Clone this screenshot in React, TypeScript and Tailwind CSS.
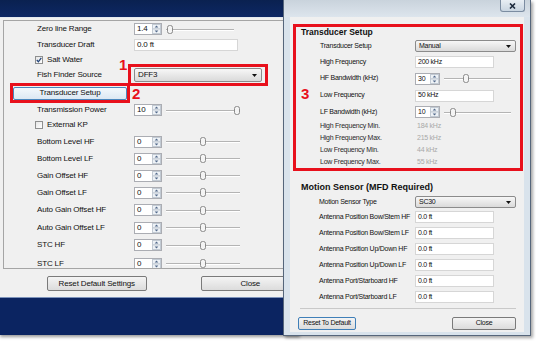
import React from "react";

type LeftRowDef = {
  label: string;
  type: "spin" | "text" | "check" | "select" | "button";
  value?: string;
  pos?: number;
  track?: number;
  checked?: boolean;
  h: string;
};

const leftRows: LeftRowDef[] = [
  { label: "Zero line Range", type: "spin", value: "1.4", pos: 4, track: 68, h: "h-[16px]" },
  { label: "Transducer Draft", type: "text", value: "0.0 ft", h: "h-[16px]" },
  { label: "Salt Water", type: "check", checked: true, h: "h-[14px]" },
  { label: "Fish Finder Source", type: "select", value: "DFF3", h: "h-[16px]" },
  { label: "Transducer Setup", type: "button", h: "h-[20px]" },
  { label: "Transmission Power", type: "spin", value: "10", pos: 71, track: 74, h: "h-[14px]" },
  { label: "External KP", type: "check", h: "h-[16px]" },
  { label: "Bottom Level HF", type: "spin", value: "0", pos: 37, track: 74, h: "h-[17px]" },
  { label: "Bottom Level LF", type: "spin", value: "0", pos: 37, track: 74, h: "h-[17px]" },
  { label: "Gain Offset HF", type: "spin", value: "0", pos: 37, track: 74, h: "h-[17px]" },
  { label: "Gain Offset LF", type: "spin", value: "0", pos: 37, track: 74, h: "h-[17px]" },
  { label: "Auto Gain Offset HF", type: "spin", value: "0", pos: 37, track: 74, h: "h-[18px]" },
  { label: "Auto Gain Offset LF", type: "spin", value: "0", pos: 37, track: 74, h: "h-[17px]" },
  { label: "STC HF", type: "spin", value: "0", pos: 37, track: 74, h: "h-[18px]" },
  { label: "STC LF", type: "spin", value: "0", pos: 37, track: 74, h: "h-[19px]" },
];

const antennaRows = [
  "Antenna Position Bow/Stem HF",
  "Antenna Position Bow/Stem LF",
  "Antenna Position Up/Down HF",
  "Antenna Position Up/Down LF",
  "Antenna Port/Starboard HF",
  "Antenna Port/Starboard LF",
];

const infoRows = [
  { label: "High Frequency Min.", value: "184 kHz" },
  { label: "High Frequency Max.", value: "215 kHz" },
  { label: "Low Frequency Min.", value: "44 kHz" },
  { label: "Low Frequency Max.", value: "55 kHz" },
];

function Spin({ value, w, h }: { value: string; w: string; h: string }) {
  return (
    <div className={`flex shrink-0 border border-[#abadb3] bg-white ${w} ${h}`}>
      <span className="flex-1 pl-[2px] leading-[10px]">{value}</span>
      <svg width="9" height="10" viewBox="0 0 9 10" className="shrink-0">
        <rect x="0.5" y="0.5" width="8" height="4.5" fill="#eef2f6" stroke="#c2cad3" />
        <rect x="0.5" y="5" width="8" height="4.5" fill="#eef2f6" stroke="#c2cad3" />
        <path d="M4.5 1.6 L6.3 3.6 L2.7 3.6Z" fill="#52698a" />
        <path d="M4.5 8.4 L6.3 6.4 L2.7 6.4Z" fill="#52698a" />
      </svg>
    </div>
  );
}

function Slider({ w, pos }: { w: number; pos: number }) {
  return (
    <svg width={w} height="11" viewBox={`0 0 ${w} 11`} className="ml-[4px] shrink-0">
      <line x1="0" y1="5.5" x2={w} y2="5.5" stroke="#b4b4b4" />
      <line x1="0" y1="6.5" x2={w} y2="6.5" stroke="#ffffff" />
      <rect x={pos - 2.5} y="1.5" width="5" height="8" rx="2" fill="#f4f4f4" stroke="#8a8a8a" />
    </svg>
  );
}

function Select({ value, w, h }: { value: string; w: string; h: string }) {
  return (
    <div
      className={`flex shrink-0 items-center rounded-[2px] border border-[#8b8b8b] bg-gradient-to-b from-[#f7f7f7] to-[#dadada] pl-[3px] pr-[4px] ${w} ${h}`}
    >
      <span className="flex-1">{value}</span>
      <svg width="5" height="3" viewBox="0 0 5 3">
        <path d="M0 0H5L2.5 3Z" fill="#111" />
      </svg>
    </div>
  );
}

function TextBox({ value, w, h }: { value: string; w: string; h: string }) {
  return (
    <div className={`flex shrink-0 items-center border border-[#d6d6d6] bg-white pl-[2px] ${w} ${h}`}>
      {value}
    </div>
  );
}

function CheckBox({ checked }: { checked?: boolean }) {
  return (
    <div className="flex h-[8px] w-[8px] shrink-0 items-center justify-center border border-[#8e8f8f] bg-gradient-to-br from-[#e6e6e6] to-white">
      {checked && (
        <svg width="6" height="6" viewBox="0 0 6 6">
          <path d="M0.8 3 L2.4 4.8 L5.3 0.9" fill="none" stroke="#24457a" strokeWidth="1.3" />
        </svg>
      )}
    </div>
  );
}

function LeftRow({ row }: { row: LeftRowDef }) {
  if (row.type === "check") {
    return (
      <div className={`flex items-center pl-[31px] ${row.h}`}>
        <CheckBox checked={row.checked} />
        <span className="ml-[4px]">{row.label}</span>
      </div>
    );
  }
  if (row.type === "button") {
    return (
      <div className={`flex items-center pl-[9px] ${row.h}`}>
        <div className="flex h-[13px] w-[114px] items-center justify-center rounded-[2px] border border-[#4a86bd] bg-gradient-to-b from-[#f3f8fc] to-[#dce8f3]">
          {row.label}
        </div>
      </div>
    );
  }
  return (
    <div className={`flex items-center pl-[33px] ${row.h}`}>
      <span className="w-[97px] shrink-0 whitespace-nowrap">{row.label}</span>
      {row.type === "spin" && (
        <>
          <Spin value={row.value ?? ""} w="w-[28px]" h="h-[12px]" />
          <Slider w={row.track ?? 74} pos={row.pos ?? 0} />
        </>
      )}
      {row.type === "text" && <TextBox value={row.value ?? ""} w="w-[104px]" h="h-[12px]" />}
      {row.type === "select" && <Select value={row.value ?? ""} w="w-[128px]" h="h-[14px]" />}
    </div>
  );
}

function LeftWindow() {
  return (
    <div className="flex h-[335px] w-[300px] flex-col text-[8px] tracking-[-0.15px] shadow-[0_2px_3px_rgba(0,0,0,0.4)]">
      <div className="h-[17px] bg-gradient-to-b from-[#0a2150] to-[#0d2764]" />
      <div className="h-px bg-[#e3e8ef]" />
      <div className="flex h-[279px] flex-col bg-[#f0f0f0]">
        <div className="ml-[3px] mt-[2px] h-[249px] overflow-hidden border-y border-l border-[#a5a5a5]">
          {leftRows.map((row) => (
            <LeftRow key={row.label} row={row} />
          ))}
        </div>
        <div className="mt-[7px] flex gap-[54px] pl-[47px]">
          <div className="flex h-[15px] w-[106px] items-center justify-center rounded-[2px] border border-[#7a7a7a] bg-gradient-to-b from-[#f4f4f4] to-[#dcdcdc]">
            Reset Default Settings
          </div>
          <div className="flex h-[15px] w-[106px] items-center justify-center rounded-[2px] border border-[#7a7a7a] bg-gradient-to-b from-[#f4f4f4] to-[#dcdcdc]">
            Close
          </div>
        </div>
      </div>
      <div className="h-px bg-[#7d93bb]" />
      <div className="flex-1 bg-[#0b2461]" />
    </div>
  );
}

function RightWindow() {
  return (
    <div className="absolute left-[283px] top-0 flex h-[336px] w-[248px] flex-col border-x border-b border-[#56667b] bg-[#d9e3ec] text-[7px] tracking-[-0.25px] shadow-[2px_2px_3px_rgba(0,0,0,0.35)]">
      <div className="flex h-[17px] justify-end bg-gradient-to-b from-[#c9d3dc] to-[#dde5ed] pr-[5px]">
        <div className="flex h-[12px] w-[25px] items-center justify-center rounded-b-[3px] border border-t-0 border-[#7b8ca1] bg-gradient-to-b from-[#e8eef4] to-[#c9d5e1]">
          <svg width="7" height="6" viewBox="0 0 7 6">
            <path d="M1 0.5 L6 5.5 M6 0.5 L1 5.5" stroke="#1d2b3e" strokeWidth="1.6" />
          </svg>
        </div>
      </div>
      <div className="mx-[6px] flex h-[315px] flex-col bg-[#f0f0f0]">
        <div className="ml-[3px] mt-[7px] h-[147px] w-[230px] border-[3px] border-[#e8101c]">
          <div className="flex h-[11px] items-center pl-[5px] text-[8.5px] font-bold tracking-normal">
            Transducer Setup
          </div>
          <div className="flex h-[16px] items-center pl-[24px]">
            <span className="w-[95px] shrink-0">Transducer Setup</span>
            <Select value="Manual" w="w-[101px]" h="h-[12px]" />
          </div>
          <div className="flex h-[16px] items-center pl-[24px]">
            <span className="w-[95px] shrink-0">High Frequency</span>
            <TextBox value="200 kHz" w="w-[79px]" h="h-[12px]" />
          </div>
          <div className="flex h-[17px] items-center pl-[24px]">
            <span className="w-[95px] shrink-0">HF Bandwidth (kHz)</span>
            <Spin value="30" w="w-[25px]" h="h-[12px]" />
            <Slider w={67} pos={22} />
          </div>
          <div className="flex h-[17px] items-center pl-[24px]">
            <span className="w-[95px] shrink-0">Low Frequency</span>
            <TextBox value="50 kHz" w="w-[79px]" h="h-[12px]" />
          </div>
          <div className="flex h-[16px] items-center pl-[24px]">
            <span className="w-[95px] shrink-0">LF Bandwidth (kHz)</span>
            <Spin value="10" w="w-[25px]" h="h-[12px]" />
            <Slider w={67} pos={9} />
          </div>
          {infoRows.map((r) => (
            <div key={r.label} className="flex h-[12px] items-center pl-[24px]">
              <span className="w-[97px] shrink-0 text-[#2a2a2a]">{r.label}</span>
              <span className="text-[#a8a8a8]">{r.value}</span>
            </div>
          ))}
        </div>
        <div className="mt-[10px] flex h-[14px] items-center pl-[11px] text-[9px] font-bold tracking-normal">
          Motion Sensor (MFD Required)
        </div>
        <div className="flex h-[14px] items-center pl-[29px]">
          <span className="w-[96px] shrink-0">Motion Sensor Type</span>
          <Select value="SC30" w="w-[101px]" h="h-[12px]" />
        </div>
        {antennaRows.map((label) => (
          <div key={label} className="flex h-[16px] items-center pl-[29px]">
            <span className="w-[96px] shrink-0 whitespace-nowrap">{label}</span>
            <TextBox value="0.0 ft" w="w-[79px]" h="h-[12px]" />
          </div>
        ))}
        <div className="ml-[10px] mt-[3px] h-px w-[216px] bg-[#c9c9c9]" />
        <div className="ml-[8px] mt-[8px] flex w-[218px] justify-between">
          <div className="flex h-[13px] w-[58px] items-center justify-center rounded-[2px] border border-[#3f7fb8] bg-gradient-to-b from-[#f4f4f4] to-[#dcdcdc]">
            Reset To Default
          </div>
          <div className="flex h-[13px] w-[64px] items-center justify-center rounded-[2px] border border-[#7a7a7a] bg-gradient-to-b from-[#f4f4f4] to-[#dcdcdc]">
            Close
          </div>
        </div>
      </div>
    </div>
  );
}

export default function App() {
  return (
    <div className="relative h-[341px] w-[536px] overflow-hidden bg-white font-['Liberation_Sans',Arial,sans-serif] text-[#111]">
      <LeftWindow />
      <RightWindow />
      {/* red annotations over the screenshot */}
      <div className="absolute left-[128px] top-[64px] h-[22px] w-[140px] border-[3px] border-[#e8101c]" />
      <div className="absolute left-[10px] top-[83px] h-[20px] w-[120px] border-[3px] border-[#e8101c]" />
      <span className="absolute left-[119px] top-[57px] text-[15px] font-bold leading-[15px] text-[#e8101c]">1</span>
      <span className="absolute left-[132px] top-[86px] text-[15px] font-bold leading-[15px] text-[#e8101c]">2</span>
      <span className="absolute left-[301px] top-[86px] text-[15px] font-bold leading-[15px] text-[#e8101c]">3</span>
    </div>
  );
}
